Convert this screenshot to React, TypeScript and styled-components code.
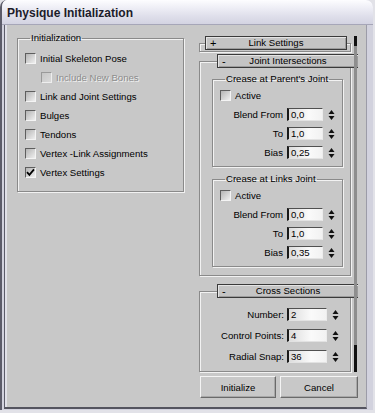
import React from "react";
import styled, { createGlobalStyle } from "styled-components";

const GlobalStyle = createGlobalStyle`
  html, body {
    margin: 0;
    padding: 0;
    background: #e2e2e8;
  }
  body {
    font-family: "Liberation Sans", Arial, sans-serif;
    font-size: 9.6px;
    color: #000;
  }
`;

const Window = styled.div`
  width: 373px;
  height: 410px;
  box-sizing: border-box;
  display: flex;
  flex-direction: column;
  border-left: 2px solid #5c5c6a;
  border-radius: 7px 7px 0 0;
  background: #d2d2de;
  overflow: hidden;
`;

const TitleBar = styled.div`
  flex: none;
  height: 25px;
  box-sizing: border-box;
  display: flex;
  align-items: center;
  padding: 1px 0 0 5px;
  background: linear-gradient(#fdfdff 0%, #ededf5 35%, #dedeea 70%, #d3d3e2 100%);
  border-bottom: 1px solid #a6a6b8;
  font: bold 12px "Liberation Sans", Arial, sans-serif;
  color: #1c1c2a;
`;

const Frame = styled.div`
  flex: 1;
  min-height: 0;
  display: flex;
  padding: 0 6px 1px 2px;
`;

const Client = styled.main`
  flex: 1;
  display: flex;
  gap: 15px;
  padding: 7px 8px 9px 12px;
  background: #c8c8c8;
  border-left: 1px solid #5c5c6a;
  border-right: 1px solid #9c9ca8;
  border-bottom: 2px solid #54545f;
  box-shadow: inset 2px 0 0 #e0e0e8;
`;

const etched = `
  border: 1px solid #8a8a8a;
  box-shadow: inset 1px 1px 0 #f2f2f2, 1px 1px 0 #f2f2f2;
`;

const Group = styled.fieldset<{ $width: number }>`
  width: ${(p) => p.$width}px;
  box-sizing: border-box;
  margin: 0;
  min-width: 0;
  padding: 0 7px 7px 7px;
  ${etched}
`;

const GroupTitle = styled.legend`
  margin-left: 5px;
  padding: 0 1px;
  line-height: 12px;
`;

const InitGroup = styled(Group)`
  align-self: flex-start;
  padding-bottom: 12px;
`;

const CheckList = styled.div`
  display: flex;
  flex-direction: column;
  gap: 6px;
  margin-top: 8px;
`;

const CheckRow = styled.label<{ $indent?: boolean; $disabled?: boolean }>`
  display: flex;
  align-items: center;
  gap: 4px;
  height: 13px;
  padding-left: ${(p) => (p.$indent ? 16 : 0)}px;
  color: ${(p) => (p.$disabled ? "#8c8c8c" : "#000")};
  text-shadow: ${(p) => (p.$disabled ? "1px 1px 0 #f2f2f2" : "none")};
  white-space: nowrap;
`;

const Box = styled.span<{ $disabled?: boolean }>`
  flex: none;
  width: 11px;
  height: 11px;
  box-sizing: border-box;
  display: flex;
  align-items: center;
  justify-content: center;
  border-style: solid;
  border-width: 1px;
  border-color: ${(p) =>
    p.$disabled ? "#9a9a9a #eeeeee #eeeeee #9a9a9a" : "#5e5e5e #f4f4f4 #f4f4f4 #5e5e5e"};
  background: ${(p) =>
    p.$disabled
      ? "linear-gradient(135deg, #c6c6c6, #dadada)"
      : "linear-gradient(135deg, #b4b4b4, #efefef)"};
  text-shadow: none;
`;

const RightColumn = styled.div`
  width: 159px;
  display: flex;
  flex-direction: column;
  gap: 3px;
`;

const RolloutArea = styled.div`
  height: 341px;
  box-sizing: border-box;
  display: flex;
  padding-top: 4px;
  overflow: hidden;
`;

const RolloutStack = styled.div`
  width: 152px;
  flex: none;
  display: flex;
  flex-direction: column;
`;

const ScrollBar = styled.div`
  width: 3px;
  margin: 0 0 1px 3px;
  display: flex;
  flex-direction: column;
  background: #8e8e8e;
`;

const ScrollCap = styled.div<{ $h: number }>`
  height: ${(p) => p.$h}px;
  background: #101010;
`;

const ScrollGap = styled.div`
  flex: 1;
`;

const Rollout = styled.fieldset<{ $pad: string; $gap: number }>`
  margin: 0 0 ${(p) => p.$gap}px 0;
  min-width: 0;
  padding: ${(p) => p.$pad};
  ${etched}
`;

const RolloutHeader = styled.legend`
  width: 142px;
  height: 14px;
  box-sizing: border-box;
  margin-left: 5px;
  padding: 0;
  border: 1px solid #3a3a3a;
  background: #c4c4c4;
  box-shadow: inset 1px 1px 0 #e4e4e4, inset -1px -1px 0 #9c9c9c;
`;

const HeaderInner = styled.div`
  display: flex;
  align-items: center;
  height: 12px;
  line-height: 12px;
`;

const Sign = styled.span`
  width: 14px;
  padding-left: 4px;
  box-sizing: border-box;
  font-size: 11px;
`;

const HeaderText = styled.span`
  flex: 1;
  text-align: center;
`;

const InnerGroup = styled(Group)<{ $top: number }>`
  margin-top: ${(p) => p.$top}px;
`;

const ActiveRow = styled(CheckRow)`
  margin-top: 4px;
  margin-bottom: 6px;
`;

const SpinList = styled.div<{ $gap: number }>`
  display: flex;
  flex-direction: column;
  gap: ${(p) => p.$gap}px;
`;

const SpinRow = styled.div`
  display: flex;
  align-items: center;
  justify-content: flex-end;
  height: 13px;
  white-space: nowrap;
`;

const SpinLabel = styled.span<{ $gap: number }>`
  margin-right: ${(p) => p.$gap}px;
`;

const Field = styled.div<{ $w: number }>`
  width: ${(p) => p.$w}px;
  height: 13px;
  box-sizing: border-box;
  padding-left: 2px;
  line-height: 11px;
  border-style: solid;
  border-width: 1px 1px 1px 2px;
  border-color: #505050 #ececec #e2e2e2 #1a1a1a;
  background: linear-gradient(to right, #dcdcdc, #fafafa 60%, #f2f2f2);
`;

const Arrows = styled.svg`
  flex: none;
  margin-left: 5px;
`;

const ButtonRow = styled.div`
  display: flex;
  gap: 4px;
  padding-left: 1px;
`;

const Button = styled.button<{ $w: number }>`
  width: ${(p) => p.$w}px;
  height: 22px;
  margin: 0;
  padding: 0;
  font: 9.6px "Liberation Sans", Arial, sans-serif;
  color: #000;
  background: #c8c8c8;
  border: 1px solid;
  border-color: #f4f4f4 #6a6a6a #6a6a6a #f4f4f4;
  box-shadow: inset -1px -1px 0 #a8a8a8;
`;

function Check({ checked, disabled }: { checked?: boolean; disabled?: boolean }) {
  return (
    <Box $disabled={disabled}>
      {checked && (
        <svg width="9" height="9" viewBox="0 0 9 9">
          <path d="M1 4.2 L3.4 6.8 L8 1.4" fill="none" stroke="#000" strokeWidth="1.8" />
        </svg>
      )}
    </Box>
  );
}

function Spinner() {
  return (
    <Arrows width="7" height="12" viewBox="0 0 7 12">
      <path d="M3.5 1 L6.5 5 L0.5 5 Z" fill="#111" />
      <path d="M0.5 7 L6.5 7 L3.5 11 Z" fill="#111" />
    </Arrows>
  );
}

type Spin = { label: string; value: string };

function SpinField({ label, value, width, gap }: Spin & { width: number; gap: number }) {
  return (
    <SpinRow>
      <SpinLabel $gap={gap}>{label}</SpinLabel>
      <Field $w={width}>{value}</Field>
      <Spinner />
    </SpinRow>
  );
}

function CreaseGroup({ title, spins, top }: { title: string; spins: Spin[]; top: number }) {
  return (
    <InnerGroup $width={131} $top={top}>
      <GroupTitle>{title}</GroupTitle>
      <ActiveRow>
        <Check />
        Active
      </ActiveRow>
      <SpinList $gap={6}>
        {spins.map((s) => (
          <SpinField key={s.label} {...s} width={36} gap={4} />
        ))}
      </SpinList>
    </InnerGroup>
  );
}

const initItems = [
  { label: "Initial Skeleton Pose" },
  { label: "Include New Bones", indent: true, disabled: true },
  { label: "Link and Joint Settings" },
  { label: "Bulges" },
  { label: "Tendons" },
  { label: "Vertex -Link Assignments" },
  { label: "Vertex Settings", checked: true },
];

const crossSpins: Spin[] = [
  { label: "Number:", value: "2" },
  { label: "Control Points:", value: "4" },
  { label: "Radial Snap:", value: "36" },
];

export default function App() {
  return (
    <>
      <GlobalStyle />
      <Window>
        <TitleBar>Physique Initialization</TitleBar>
        <Frame>
          <Client>
            <InitGroup $width={167}>
              <GroupTitle>Initialization</GroupTitle>
              <CheckList>
                {initItems.map((it) => (
                  <CheckRow key={it.label} $indent={it.indent} $disabled={it.disabled}>
                    <Check checked={it.checked} disabled={it.disabled} />
                    {it.label}
                  </CheckRow>
                ))}
              </CheckList>
            </InitGroup>

            <RightColumn>
              <RolloutArea>
                <RolloutStack>
                  <Rollout $pad="0 0 1px 0" $gap={2}>
                    <RolloutHeader>
                      <HeaderInner>
                        <Sign>+</Sign>
                        <HeaderText>Link Settings</HeaderText>
                        <Sign />
                      </HeaderInner>
                    </RolloutHeader>
                  </Rollout>

                  <Rollout $pad="0 7px 8px 12px" $gap={8}>
                    <RolloutHeader>
                      <HeaderInner>
                        <Sign>-</Sign>
                        <HeaderText>Joint Intersections</HeaderText>
                        <Sign />
                      </HeaderInner>
                    </RolloutHeader>
                    <CreaseGroup
                      top={5}
                      title="Crease at Parent's Joint"
                      spins={[
                        { label: "Blend From", value: "0,0" },
                        { label: "To", value: "1,0" },
                        { label: "Bias", value: "0,25" },
                      ]}
                    />
                    <CreaseGroup
                      top={6}
                      title="Crease at Links Joint"
                      spins={[
                        { label: "Blend From", value: "0,0" },
                        { label: "To", value: "1,0" },
                        { label: "Bias", value: "0,35" },
                      ]}
                    />
                  </Rollout>

                  <Rollout $pad="10px 11px 8px 12px" $gap={0}>
                    <RolloutHeader>
                      <HeaderInner>
                        <Sign>-</Sign>
                        <HeaderText>Cross Sections</HeaderText>
                        <Sign />
                      </HeaderInner>
                    </RolloutHeader>
                    <SpinList $gap={8}>
                      {crossSpins.map((s) => (
                        <SpinField key={s.label} {...s} width={40} gap={3} />
                      ))}
                    </SpinList>
                  </Rollout>
                </RolloutStack>
                <ScrollBar>
                  <ScrollCap $h={10} />
                  <ScrollGap />
                  <ScrollCap $h={27} />
                </ScrollBar>
              </RolloutArea>

              <ButtonRow>
                <Button $w={76}>Initialize</Button>
                <Button $w={78}>Cancel</Button>
              </ButtonRow>
            </RightColumn>
          </Client>
        </Frame>
      </Window>
    </>
  );
}
